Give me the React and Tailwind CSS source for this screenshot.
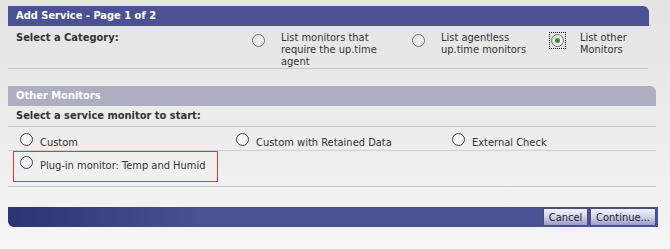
import React from 'react';

const font = { fontFamily: '"DejaVu Sans Condensed", "DejaVu Sans", Tahoma, sans-serif' };

// XP style radio used in the category row
const XpRadio = ({ checked }) => (
  <div className="relative w-[13px] h-[13px] shrink-0">
    {checked && (
      <div className="absolute -left-[2px] -top-[2px] w-[17px] h-[17px] border border-dotted border-black" />
    )}
    <div className="w-[13px] h-[13px] rounded-full border border-[#6b7383] bg-gradient-to-br from-[#d6d6d0] via-[#ecece8] to-white flex items-center justify-center">
      {checked && <div className="w-[5px] h-[5px] rounded-full bg-[#2a9a2a]" />}
    </div>
  </div>
);

// plain outlined radio used in the monitor list
const PlainRadio = () => (
  <div className="w-[13px] h-[13px] shrink-0 rounded-full border border-[#34405e] bg-[#f4f4f6]" />
);

const Category = ({ checked, lines, width }) => (
  <div className="flex items-start" style={{ width }}>
    <div className="pt-[2px]">
      <XpRadio checked={checked} />
    </div>
    <div className="ml-[16px] leading-[12px] text-[#333]">
      {lines.map((l) => (
        <div key={l}>{l}</div>
      ))}
    </div>
  </div>
);

const Monitor = ({ label }) => (
  <div className="flex items-start w-[216px]">
    <PlainRadio />
    <span className="ml-[7px] pt-[3px] leading-[13px] text-[#333]">{label}</span>
  </div>
);

const btn =
  'h-[18px] border border-[#4a4e80] text-[#1a1a2a] bg-gradient-to-b from-[#f2f2fa] via-[#d2d3e8] to-[#9a9dc4] text-[11px] leading-none';

export default function App() {
  return (
    <div
      className="w-[670px] h-[249px] overflow-hidden bg-gradient-to-b from-[#e3e3e3] via-[#ececec] to-[#f5f5f5] pt-[6px] pl-[8px] text-[11px]"
      style={font}
    >
      <div className="w-[641px] h-[20px] bg-[#4b5192] rounded-tr-[6px] flex items-center pl-[8px] pt-px text-white font-bold">
        Add Service - Page 1 of 2
      </div>

      <div className="w-[640px] h-[42px] flex pl-[8px] pt-[6px]">
        <div className="w-[236px] font-bold text-[#333] leading-[12px]">Select a Category:</div>
        <Category width={160} lines={['List monitors that', 'require the up.time', 'agent']} />
        <Category width={139} lines={['List agentless', 'up.time monitors']} />
        <Category checked lines={['List other', 'Monitors']} />
      </div>
      <div className="w-[640px] h-px bg-[#c8c8c8]" />

      <div className="mt-[17px] w-[648px] h-[20px] bg-[#adaec0] rounded-tr-[6px] flex items-center pl-[8px] pt-px text-white font-bold">
        Other Monitors
      </div>
      <div className="h-[20px] flex items-center pl-[8px] pt-px font-bold text-[#333]">
        Select a service monitor to start:
      </div>
      <div className="w-[648px] h-px bg-[#c8c8c8]" />

      <div className="h-[23px] flex items-start pl-[12px] pt-[6px]">
        <Monitor label="Custom" />
        <Monitor label="Custom with Retained Data" />
        <Monitor label="External Check" />
      </div>
      <div className="w-[648px] h-px bg-[#cfcfcf]" />

      <div className="h-[35px] pl-[5px]">
        <div className="w-[205px] h-[31px] border border-[#e03a3a] pl-[6px] pt-[4px]">
          <Monitor label="Plug-in monitor: Temp and Humid" />
        </div>
      </div>
      <div className="w-[648px] h-px bg-[#c8c8c8]" />

      <div className="mt-[20px] w-[650px] h-[20px] rounded-bl-[6px] bg-gradient-to-r from-[#2b3377] via-[#4b5192] via-30% to-[#4b5192] flex items-center justify-end pr-[2px] gap-[2px]">
        <button className={`${btn} w-[45px]`}>Cancel</button>
        <button className={`${btn} w-[66px]`}>Continue...</button>
      </div>
    </div>
  );
}
